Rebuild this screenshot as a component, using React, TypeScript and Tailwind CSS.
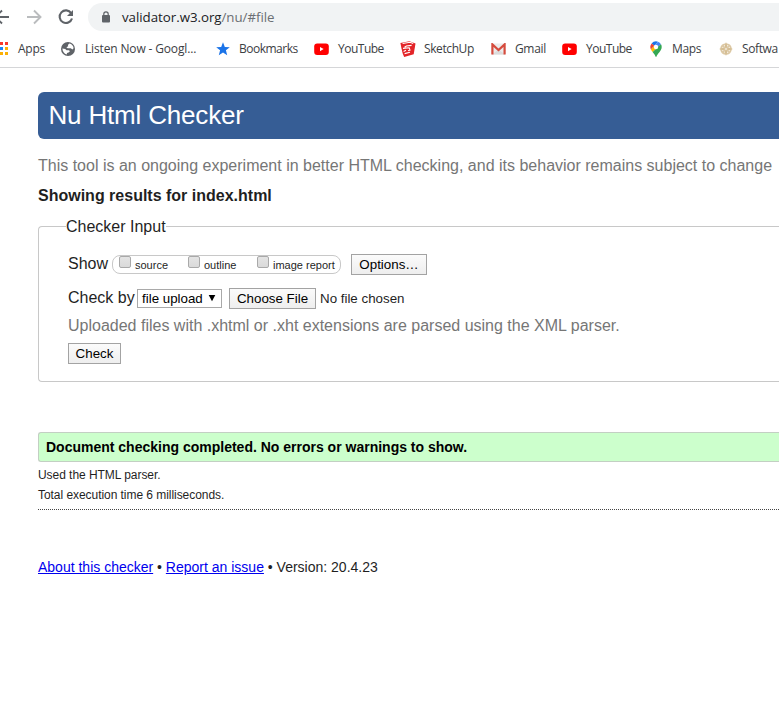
import type { ReactNode } from 'react';

const Globe = () => (
  <svg width="14" height="14" viewBox="0 0 14 14">
    <circle cx="7" cy="7" r="7" fill="#5f6368" />
    <path d="M8.3 1.5C10.8 1.9 12.5 4 12.6 6.2L11.4 7.6 9.8 6.2H6.6L5.4 5.2 7.2 4.2 6.9 2.9ZM1.4 6.6 4.2 7 5.6 8.2H8L8.9 9.3 7.6 10.6 6 10.9 5.8 12.5C3.2 11.9 1.4 9.6 1.4 6.6Z" fill="#fff" />
  </svg>
);

const Star = () => (
  <svg width="14" height="14" viewBox="0 0 14 14">
    <path d="M7 .3 8.8 4.9 13.8 5.2 9.9 8.3 11.2 13.3 7 10.5 2.8 13.3 4.1 8.3.2 5.2 5.2 4.9Z" fill="#1a73e8" />
  </svg>
);

const YouTube = () => (
  <svg width="15" height="12" viewBox="0 0 15 12">
    <rect width="14.6" height="11.4" x=".2" y=".5" rx="3" fill="#f00" />
    <path d="M6 4v4.2l3.6-2.1Z" fill="#fff" />
  </svg>
);

const SketchUp = () => (
  <svg width="16" height="16" viewBox="0 0 16 16">
    <path d="M.4 2 9.5.2 15.5 2.6 13.7 13.2 4.2 15.9 2.6 12.2 1.5 7.5Z" fill="#e32428" />
    <path d="M2.6 2.5 10 1.3l3.2 1.3M4.6 6.3 6.4 5l5.2-.6M3 7.4l6.2-.6.8 2.4-2 .6M3.6 10.6l2.4-1.4M4.6 12.6l5.4-1.4" fill="none" stroke="#fff" strokeWidth="1.1" />
  </svg>
);

const Gmail = () => (
  <svg width="15" height="12" viewBox="0 0 15 12">
    <rect x="1" y=".5" width="13" height="11" fill="#ececec" />
    <path d="m1 11.5 6.5-5 6.5 5Z" fill="#dcdcdc" />
    <path d="M1.4 11.5V1.4L7.5 7l6.1-5.6v10.1" fill="none" stroke="#d54b3d" strokeWidth="2.2" />
  </svg>
);

const MapPin = () => (
  <svg width="12" height="16" viewBox="0 0 12 16">
    <path d="M6 .3A5.7 5.7 0 0 0 1.6 2.4L4.4 4.7 8 .7A6 6 0 0 0 6 .3Z" fill="#1a73e8" />
    <path d="M1.6 2.4A5.8 5.8 0 0 0 .9 8.4L4.4 4.7Z" fill="#ea4335" />
    <path d="M8 .7 4.4 4.7 7.6 7.2 11 3.2A5.7 5.7 0 0 0 8 .7Z" fill="#4285f4" />
    <path d="M.9 8.4 2.6 11 11 3.2 7.6 7.2 4.4 4.7Z" fill="#fbbc04" />
    <path d="M11 3.2 2.6 11C4.4 13.2 5 14.2 5.5 15.5c.2.5.8.5 1 0C7.3 12.8 11.7 10 11.7 6 11.7 5 11.5 4 11 3.2Z" fill="#34a853" />
    <circle cx="6" cy="6" r="2.2" fill="#fff" />
  </svg>
);

const Compass = () => (
  <svg width="14" height="14" viewBox="0 0 14 14">
    <circle cx="7" cy="7" r="4.9" fill="none" stroke="#dcc8a4" strokeWidth="1.9" />
    <path d="M7 0 8.7 5.3 14 7 8.7 8.7 7 14 5.3 8.7 0 7 5.3 5.3Z" fill="#d5be94" />
    <path d="m3.2 3.2 7.6 7.6M10.8 3.2l-7.6 7.6" stroke="#dcc8a4" strokeWidth="1.5" />
    <circle cx="7" cy="7" r=".8" fill="#fff" />
  </svg>
);

const Apps = () => (
  <svg width="8" height="14" viewBox="0 0 8 14">
    <path d="M0 0h3v3H0zM5 0h3v3H5z" fill="#f9382b" />
    <path d="M0 5h3v3H0z" fill="#1a86f8" />
    <path d="M5 5h3v3H5zM0 10h3v3H0zM5 10h3v3H5z" fill="#fbb005" />
  </svg>
);

const bookmarks = [
  { icon: <Apps />, label: 'Apps', box: 'w-[61px]', gap: 'w-[18px]', text: 'tracking-[-0.25px]' },
  { icon: <Globe />, label: 'Listen Now - Googl...', box: 'w-[155px]', gap: 'w-6', text: 'tracking-[-0.15px]' },
  { icon: <Star />, label: 'Bookmarks', box: 'w-[98px]', gap: 'w-[23px]', text: 'tracking-[-0.5px]' },
  { icon: <YouTube />, label: 'YouTube', box: 'w-[86px]', gap: 'w-6', text: 'tracking-[-0.5px]' },
  { icon: <SketchUp />, label: 'SketchUp', box: 'w-[91px]', gap: 'w-6', text: 'tracking-[-0.4px]' },
  { icon: <Gmail />, label: 'Gmail', box: 'w-[71px]', gap: 'w-6', text: 'tracking-[-0.35px]' },
  { icon: <YouTube />, label: 'YouTube', box: 'w-[88px]', gap: 'w-6', text: 'tracking-[-0.5px]' },
  { icon: <MapPin />, label: 'Maps', box: 'w-[69px]', gap: 'w-[22px]', text: 'tracking-[-0.35px]' },
  { icon: <Compass />, label: 'Softwa', box: 'w-[60px]', gap: 'w-[23px]', text: 'tracking-[-0.4px]' },
];

function Toolbar() {
  return (
    <header className="h-[68px] overflow-hidden border-b border-[#d5d6d8] font-['Open_Sans',sans-serif]">
      <div className="flex h-[34px] items-center">
        <svg className="shrink-0" width="88" height="34" viewBox="0 0 88 34" fill="none" strokeWidth="1.9">
          <path d="M9 17H-4M2 10.5-4.5 17 2 23.5" stroke="#5f6368" />
          <path d="M27 17h13M34 10.5l6.5 6.5-6.5 6.5" stroke="#babcbe" />
          <path d="M71.2 13.2A6.3 6.3 0 1 0 72 18.5" stroke="#5f6368" strokeWidth="2.1" />
          <path d="M73 10v6h-6Z" fill="#5f6368" />
        </svg>
        <div className="mb-px flex h-7 grow items-center rounded-l-full bg-[#f1f3f4] pl-3.5">
          <svg className="shrink-0" width="8" height="12" viewBox="0 0 8 12">
            <rect y="4" width="8" height="7.5" rx="1" fill="#5f6368" />
            <path d="M1.8 4.5V3a2.2 2.2 0 0 1 4.4 0v1.5" fill="none" stroke="#5f6368" strokeWidth="1.2" />
          </svg>
          <span className="ml-3 whitespace-nowrap text-[13.3px] leading-5 tracking-[-0.03px] text-[#202124]">
            validator.w3.org<span className="text-[#6b6f73]">/nu/#file</span>
          </span>
        </div>
      </div>
      <nav className="flex h-[30px] items-center">
        {bookmarks.map((b, i) => (
          <div key={i} className={`flex shrink-0 items-center ${b.box}`}>
            <span className={`shrink-0 ${b.gap}`}>{b.icon}</span>
            <span className={`whitespace-nowrap text-[12px] leading-4 text-[#3c4043] ${b.text}`}>{b.label}</span>
          </div>
        ))}
      </nav>
    </header>
  );
}

function Button({ className, children }: { className: string; children: ReactNode }) {
  return (
    <button className={`flex h-[21px] shrink-0 items-center justify-center whitespace-nowrap border border-[#a3a3a3] bg-linear-to-b from-[#fbfbfb] to-[#eeeeee] text-[13.33px] leading-4 text-black ${className}`}>
      {children}
    </button>
  );
}

function Check({ label, className }: { label: string; className: string }) {
  return (
    <label className={`flex shrink-0 items-start ${className}`}>
      <span className="h-3 w-3 shrink-0 rounded-[2px] border border-[#a9a9a9] bg-linear-to-b from-[#e4e4e4] to-[#dadada]" />
      <span className="ml-1 mt-[3px] whitespace-nowrap text-[11px] leading-[13px]">{label}</span>
    </label>
  );
}

export default function App() {
  return (
    <div className="h-[707px] w-full overflow-hidden bg-white font-['Liberation_Sans',Arial,sans-serif] text-[#1f1f1f]">
      <Toolbar />
      <main className="pl-[38px] pt-6">
        <h1 className="flex h-[47px] items-start rounded-l-[6px] bg-[#365d95] pl-[10.5px] text-[26px] leading-[47px] tracking-[-0.18px] text-white">
          Nu Html Checker
        </h1>
        <p className="mt-[17px] whitespace-nowrap text-base leading-5 text-[#767676]">
          This tool is an ongoing experiment in better HTML checking, and its behavior remains subject to change
        </p>
        <h2 className="mt-2.5 text-base font-bold leading-5">Showing results for index.html</h2>

        <section className="mt-5 h-[156px] rounded-l-[4px] border border-r-0 border-[#c8c8c8] pl-[27px]">
          <div className="-mt-2.5 flex h-5">
            <span className="whitespace-nowrap bg-white text-base leading-5">Checker Input</span>
          </div>
          <div className="ml-[2px] mt-[17px] flex h-[21px] items-center">
            <span className="mb-[2px] w-11 shrink-0 text-base leading-5">Show</span>
            <div className="flex h-[19px] w-[229px] shrink-0 items-start rounded-lg border border-[#c8c8c8] pl-1.5">
              <Check label="source" className="w-[69px]" />
              <Check label="outline" className="w-[69px]" />
              <Check label="image report" className="w-[79px]" />
            </div>
            <Button className="ml-2.5 w-[76px]">Options…</Button>
          </div>
          <div className="ml-[2px] mt-[13px] flex h-[21px] items-center">
            <span className="mb-[2px] w-[69px] shrink-0 whitespace-nowrap text-base leading-5">Check by</span>
            <div className="flex h-[19px] w-[85px] shrink-0 items-center justify-between border border-[#a9a9a9] pl-1 pr-[5px] text-[13.33px] leading-4 text-black">
              <span className="whitespace-nowrap">file upload</span>
              <svg width="8" height="7" viewBox="0 0 8 7"><path d="M.7 0h6.6L4 6.2Z" fill="#000" /></svg>
            </div>
            <Button className="ml-[7px] w-[87px]">Choose File</Button>
            <span className="ml-1 whitespace-nowrap text-[13.33px] leading-4">No file chosen</span>
          </div>
          <p className="ml-[2px] mt-[7px] whitespace-nowrap text-base leading-5 text-[#767676]">
            Uploaded files with .xhtml or .xht extensions are parsed using the XML parser.
          </p>
          <Button className="ml-[2px] mt-[7px] w-[53px]">Check</Button>
        </section>

        <div className="mt-[50px] flex h-[30px] items-center rounded-l-[3px] border border-r-0 border-[#c3cfc3] bg-[#ccffcc] pl-[7px] text-sm font-bold leading-5 text-black">
          Document checking completed. No errors or warnings to show.
        </div>
        <div className="h-12 border-b border-dotted border-[#444] pt-[3px] text-xs leading-5 tracking-[-0.05px]">
          <p>Used the HTML parser.</p>
          <p>Total execution time 6 milliseconds.</p>
        </div>
        <footer className="mt-[47px] whitespace-nowrap text-sm leading-5">
          <a className="text-[#0000ee] underline">About this checker</a> •{' '}
          <a className="text-[#0000ee] underline">Report an issue</a> • Version: 20.4.23
        </footer>
      </main>
    </div>
  );
}
